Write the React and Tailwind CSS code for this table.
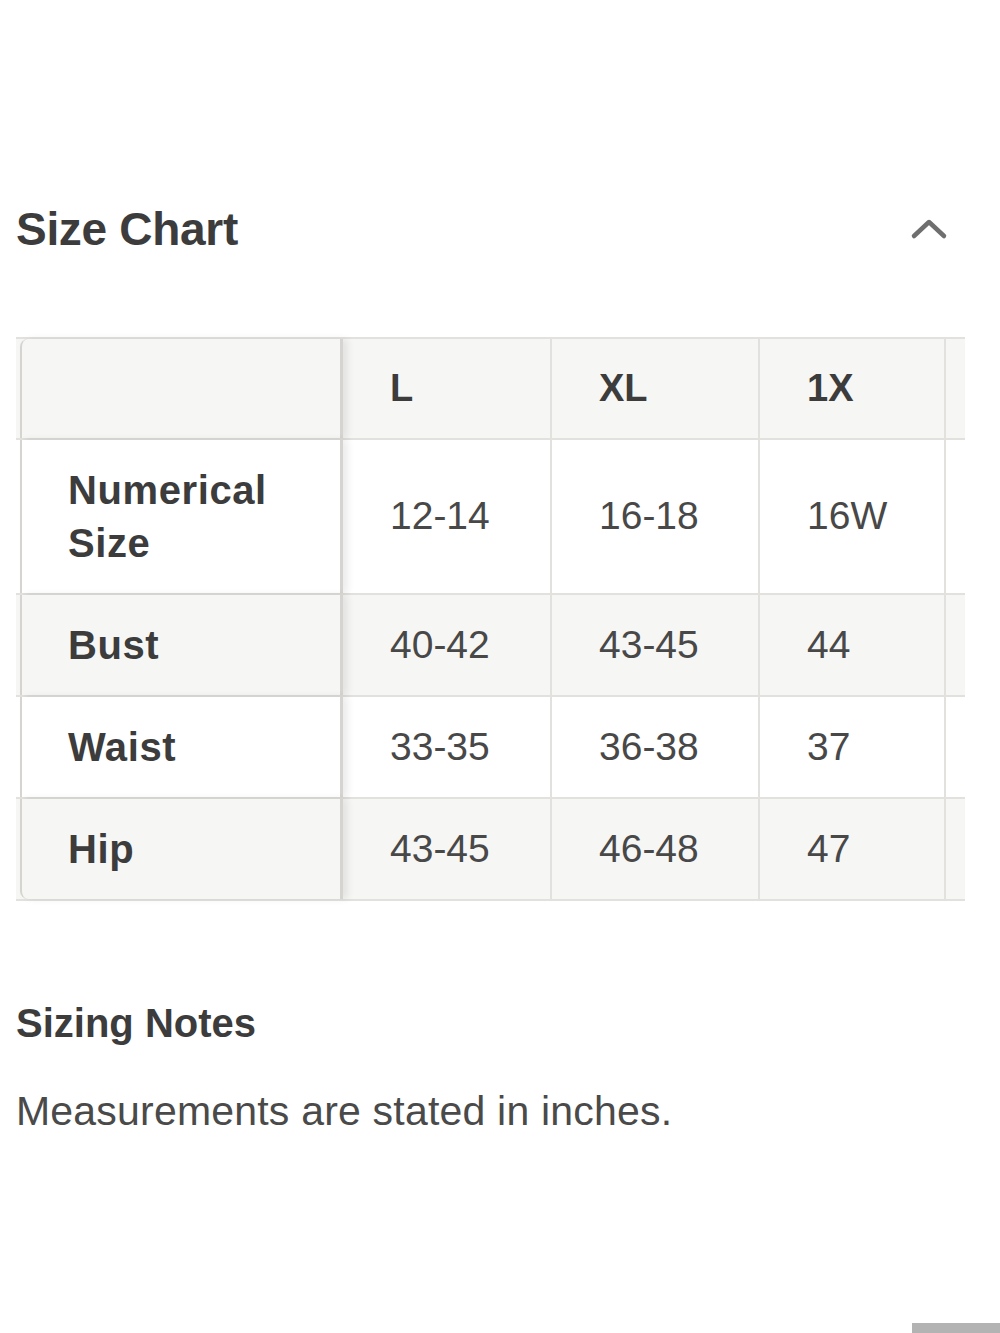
import React from "react";

const sizes = ["L", "XL", "1X"];

const rows = [
  { label: ["Numerical", "Size"], values: ["12-14", "16-18", "16W"], tall: true, shade: false },
  { label: ["Bust"], values: ["40-42", "43-45", "44"], shade: true },
  { label: ["Waist"], values: ["33-35", "36-38", "37"], shade: false },
  { label: ["Hip"], values: ["43-45", "46-48", "47"], shade: true, last: true },
];

const font = { fontFamily: '"Liberation Sans", Arial, sans-serif' };

const ChevronUp = () => (
  <svg width="38" height="22" viewBox="0 0 38 22" fill="none">
    <path d="M4 18 L19 4 L34 18" stroke="#6f6f6f" strokeWidth="4.5" strokeLinecap="round" strokeLinejoin="round" />
  </svg>
);

const Row = ({ children, shade, height }) => (
  <div
    className={`grid grid-cols-[327px_209px_208px_186px_19px] border-t-2 border-[#e3e1dd] ${shade ? "bg-[#f6f6f5]" : "bg-white"} ${height}`}
  >
    {children}
  </div>
);

const App = () => {
  return (
    <div className="min-h-[1333px] bg-white text-[#3c3c3c] flex flex-col" style={font}>
      {/* Encabezado */}
      <div className="mt-[205px] pl-[16px] pr-[52px] flex items-center justify-between">
        <h1 className="text-[46px] leading-[48px] font-bold tracking-[-0.3px]">Size Chart</h1>
        <ChevronUp />
      </div>

      {/* Tabla */}
      <div className="mt-[84px] ml-[16px] w-[949px] border-b-2 border-[#e3e1dd]">
        <Row shade height="h-[101px]">
          <div className="relative z-10 ml-[4px] border-l-2 border-r-[3px] border-[#d6d4d1] rounded-tl-[8px] shadow-[5px_0_7px_rgba(0,0,0,0.08)]" />
          {sizes.map((s) => (
            <div key={s} className="border-r-2 border-[#e3e1dd] flex items-center pl-[47px] text-[38px] font-bold">
              {s}
            </div>
          ))}
          <div />
        </Row>
        {rows.map((r) => (
          <Row key={r.label[0]} shade={r.shade} height={r.tall ? "h-[155px]" : "h-[102px]"}>
            <div
              className={`relative z-10 ml-[4px] border-l-2 border-r-[3px] border-[#d6d4d1] shadow-[5px_0_7px_rgba(0,0,0,0.08)] flex flex-col justify-center pl-[46px] text-[40px] leading-[53px] font-bold tracking-[0.6px] ${r.last ? "rounded-bl-[8px]" : ""} ${r.shade ? "bg-[#f6f6f5]" : "bg-white"}`}
            >
              {r.label.map((l) => (
                <span key={l}>{l}</span>
              ))}
            </div>
            {r.values.map((v, i) => (
              <div key={i} className="border-r-2 border-[#e3e1dd] flex items-center pl-[47px] text-[39px] text-[#484848]">
                {v}
              </div>
            ))}
            <div />
          </Row>
        ))}
      </div>

      {/* Notas */}
      <div className="pl-[16px] mt-[98px]">
        <h2 className="text-[40px] leading-[48px] font-bold">Sizing Notes</h2>
        <p className="mt-[40px] text-[41px] leading-[48px] text-[#4a4a4a] tracking-[0.2px]">
          Measurements are stated in inches.
        </p>
      </div>

      <div className="mt-auto self-end w-[88px] h-[10px] bg-[#b3b3b3]" />
    </div>
  );
};

export default App;
